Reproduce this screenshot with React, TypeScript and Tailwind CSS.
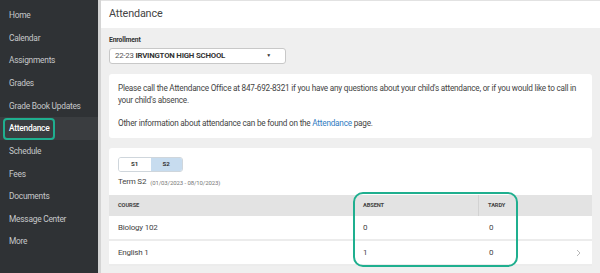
const navItems = [
  'Home',
  'Calendar',
  'Assignments',
  'Grades',
  'Grade Book Updates',
  'Attendance',
  'Schedule',
  'Fees',
  'Documents',
  'Message Center',
  'More',
];

const rows = [
  { course: 'Biology 102', absent: 0, tardy: 0 },
  { course: 'English 1', absent: 1, tardy: 0, chevron: true },
];

export default function App() {
  return (
    <div className="flex h-[273px] w-[600px] overflow-hidden bg-[#efefef] font-['Roboto',sans-serif] text-[#333]">
      <nav className="w-[98px] shrink-0 bg-[#2f3235] pt-[4px]">
        {navItems.map((item) => (
          <div
            key={item}
            className={
              item === 'Attendance'
                ? 'flex h-[22.65px] items-center bg-[#3a3d40] pl-[3px]'
                : 'flex h-[22.65px] items-center pl-[9px]'
            }
          >
            {item === 'Attendance' ? (
              <span className="flex h-[22px] items-center whitespace-nowrap rounded-[4px] border-2 border-[#1faf8f] px-[4px] text-[8.4px] font-medium tracking-[-0.25px] text-white">
                {item}
              </span>
            ) : (
              <span className="whitespace-nowrap text-[8.4px] tracking-[-0.25px] text-[#c6c8ca]">{item}</span>
            )}
          </div>
        ))}
      </nav>

      <main className="flex min-w-0 flex-1 flex-col border-l-[3px] border-[#d4d4d4]">
        <header className="flex h-[28px] shrink-0 items-center border-t border-[#e2e2e2] bg-white pl-[8px] text-[10.8px] tracking-[-0.15px] text-[#444]">
          Attendance
        </header>

        <div className="flex flex-col px-[8px] pt-[8px]">
          <label className="h-[9px] text-[6.8px] font-bold leading-[9px] tracking-[-0.15px] text-[#333]">Enrollment</label>
          <div className="mt-[3px] flex h-[16px] w-[177px] items-center justify-between rounded-[3px] border border-[#c8c8c8] bg-white pl-[5px] pr-[14px] text-[7.8px] tracking-[-0.2px]">
            <span>
              <span className="text-[#555]">22-23 </span>
              <span className="font-bold">IRVINGTON HIGH SCHOOL</span>
            </span>
            <span className="text-[5px]">▼</span>
          </div>

          <section className="mt-[10px] rounded-[3px] bg-white px-[9px] pb-[9px] pt-[8px] text-[8.2px] leading-[12px] tracking-[-0.22px] text-[#444]">
            <p>
              Please call the Attendance Office at 847-692-8321 if you have any questions about your child's
              attendance, or if you would like to call in your child's absence.
            </p>
            <p className="mt-[11px]">
              Other information about attendance can be found on the{' '}
              <span className="text-[#2f7bbf]">Attendance</span> page.
            </p>
          </section>

          <section className="mt-[10px] rounded-[3px] bg-white pt-[9px]">
            <div className="px-[9px]">
              <div className="flex h-[15px] w-[65px] overflow-hidden rounded-[3px] border border-[#cfd6dc] text-[6.2px] font-bold text-[#333]">
                <span className="flex flex-1 items-center justify-center bg-white">S1</span>
                <span className="flex flex-1 items-center justify-center bg-[#c7dcef]">S2</span>
              </div>
              <div className="mt-[3px] flex h-[14px] items-center gap-[4px] text-[8px] tracking-[-0.2px] text-[#444]">
                Term S2
                <span className="text-[6px] tracking-[-0.1px] text-[#777]">(01/03/2023 - 08/10/2023)</span>
              </div>
            </div>

            <div className="relative mt-[6px]">
              <div className="grid h-[21px] grid-cols-[252px_118px_1fr] items-center bg-[#e3e3e3] text-[5.7px] font-bold tracking-[-0.1px] text-[#444]">
                <span className="pl-[9px]">COURSE</span>
                <span className="flex h-full items-center border-r border-[#d2d2d2] pl-[2px]">ABSENT</span>
                <span className="pl-[9px]">TARDY</span>
              </div>
              {rows.map((r) => (
                <div
                  key={r.course}
                  className="grid h-[25px] grid-cols-[252px_118px_1fr] items-center border-b-2 border-[#ececec] text-[8px] tracking-[-0.2px] text-[#444]"
                >
                  <span className="pl-[9px]">{r.course}</span>
                  <span className="pl-[2px]">{r.absent}</span>
                  <span className="flex items-center justify-between pl-[10px] pr-[11px]">
                    {r.tardy}
                    {r.chevron && (
                      <svg width="5" height="8" viewBox="0 0 5 8" fill="none">
                        <path d="M1 1l3 3-3 3" stroke="#b8b8b8" strokeWidth="1" />
                      </svg>
                    )}
                  </span>
                </div>
              ))}
              <div className="absolute left-[244px] top-[-3px] h-[75px] w-[165px] rounded-[10px] border-2 border-[#1faf8f]" />
            </div>
          </section>
        </div>
      </main>
    </div>
  );
}
